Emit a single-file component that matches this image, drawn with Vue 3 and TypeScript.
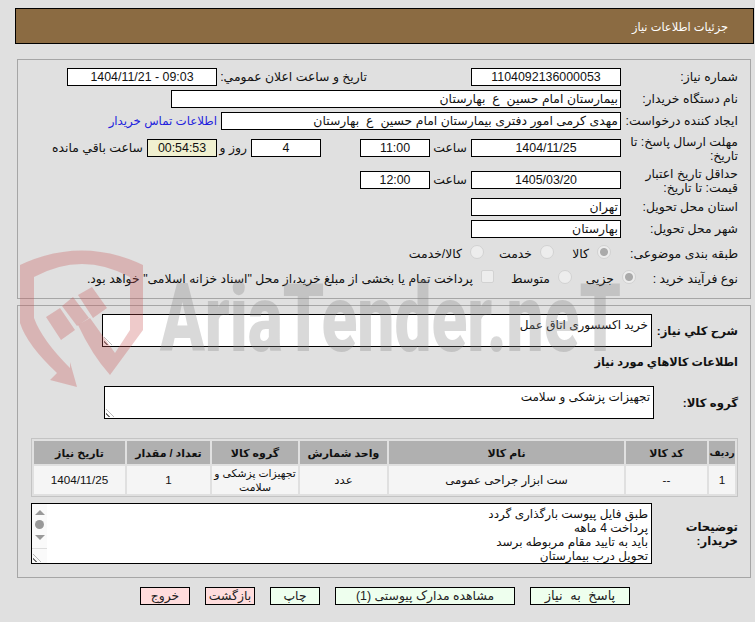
<script setup lang="ts">
interface Col { key: string; title: string; width: number; value: string }
const cols: Col[] = [
  { key: 'row', title: 'رديف', width: 26, value: '1' },
  { key: 'code', title: 'کد کالا', width: 81, value: '--' },
  { key: 'name', title: 'نام کالا', width: 235, value: 'ست ابزار جراحی عمومی' },
  { key: 'unit', title: 'واحد شمارش', width: 87, value: 'عدد' },
  { key: 'group', title: 'گروه کالا', width: 86, value: 'تجهیزات پزشکی و سلامت' },
  { key: 'qty', title: 'تعداد / مقدار', width: 83, value: '1' },
  { key: 'date', title: 'تاريخ نياز', width: 91, value: '1404/11/25' },
]
const notes = [
  'طبق فایل پیوست بارگذاری گردد',
  'پرداخت 4 ماهه',
  'باید به تایید مقام مربوطه برسد',
  'تحویل درب بیمارستان',
]
</script>

<template>
  <div class="page">
    <header class="title-bar">جزئیات اطلاعات نیاز</header>

    <section class="panel panel-top">
      <div class="row">
        <label class="lbl">شماره نیاز:</label>
        <div class="field w150 center">1104092136000053</div>
        <label class="lbl public-lbl">تاريخ و ساعت اعلان عمومي:</label>
        <div class="field w150 center">09:03 - 1404/11/21</div>
      </div>
      <div class="row gap4">
        <label class="lbl">نام دستگاه خریدار:</label>
        <div class="field w450">بیمارستان امام حسین &nbsp;ع &nbsp;بهارستان</div>
      </div>
      <div class="row gap4">
        <label class="lbl">ایجاد کننده درخواست:</label>
        <div class="field w400">مهدی کرمی امور دفتری بیمارستان امام حسین &nbsp;ع &nbsp;بهارستان</div>
        <a class="link">اطلاعات تماس خریدار</a>
      </div>
      <div class="row gap9">
        <label class="lbl two">مهلت ارسال پاسخ: تا تاریخ:</label>
        <div class="field w150 center">1404/11/25</div>
        <span class="unit hour">ساعت</span>
        <div class="field w70 center">11:00</div>
        <div class="field w70 center days">4</div>
        <span class="unit and">روز و</span>
        <div class="field w70 center timer">00:54:53</div>
        <span class="unit left">ساعت باقي مانده</span>
      </div>
      <div class="row gap14">
        <label class="lbl two">حداقل تاریخ اعتبار قیمت: تا تاریخ:</label>
        <div class="field w150 center">1405/03/20</div>
        <span class="unit hour">ساعت</span>
        <div class="field w70 center">12:00</div>
      </div>
      <div class="row gap9">
        <label class="lbl">استان محل تحویل:</label>
        <div class="field w150">تهران</div>
      </div>
      <div class="row gap4">
        <label class="lbl">شهر محل تحویل:</label>
        <div class="field w150">بهارستان</div>
      </div>
      <div class="row gap7">
        <label class="lbl">طبقه بندی موضوعی:</label>
        <div class="choices cat">
          <span class="choice c57"><i class="dot on"></i>کالا</span>
          <span class="choice c70"><i class="dot"></i>خدمت</span>
          <span class="choice"><i class="dot"></i>کالا/خدمت</span>
        </div>
      </div>
      <div class="row gap7">
        <label class="lbl short">نوع فرآیند خرید :</label>
        <div class="choices">
          <span class="choice c64"><i class="dot on"></i>جزیی</span>
          <span class="choice c78"><i class="dot"></i>متوسط</span>
          <span class="choice"><i class="box"></i>پرداخت تمام یا بخشی از مبلغ خرید،از محل "اسناد خزانه اسلامی" خواهد بود.</span>
        </div>
      </div>
    </section>

    <section class="panel panel-bottom">
      <div class="row area-row">
        <label class="lbl bold w86">شرح كلي نياز:</label>
        <div class="area w550">خرید اکسسوری اتاق عمل<i class="grip"></i></div>
      </div>
      <h2 class="subhead">اطلاعات كالاهاي مورد نياز</h2>
      <div class="row area-row group-row">
        <label class="lbl bold w84">گروه کالا:</label>
        <div class="area w550">تجهیزات پزشکی و سلامت<i class="grip"></i></div>
      </div>
      <table class="items">
        <colgroup>
          <col v-for="c in cols" :key="c.key" :style="{ width: c.width + 'px' }" />
        </colgroup>
        <thead>
          <tr><th v-for="c in cols" :key="c.key" :class="'th-' + c.key">{{ c.title }}</th></tr>
        </thead>
        <tbody>
          <tr><td v-for="c in cols" :key="c.key" :class="'td-' + c.key">{{ c.value }}</td></tr>
        </tbody>
      </table>
      <div class="row notes-row">
        <label class="lbl bold w86 two-bold">توضیحات خریدار:</label>
        <div class="notes">
          <div class="note-text">
            <div v-for="n in notes" :key="n">{{ n }}</div>
          </div>
          <div class="scroll">
            <i class="arrow up"></i>
            <i class="thumb"></i>
            <i class="arrow down"></i>
            <i class="corner"><i class="grip"></i></i>
          </div>
        </div>
      </div>
    </section>

    <footer class="actions">
      <button class="btn ok w100 answer">پاسخ به نیاز</button>
      <button class="btn ok w180">مشاهده مدارک پیوستی (1)</button>
      <button class="btn ok w50">چاپ</button>
      <button class="btn no w50">بازگشت</button>
      <button class="btn no w50">خروج</button>
    </footer>

    <div class="watermark" aria-hidden="true">
      <svg class="shield" viewBox="0 0 130 140" width="130" height="140">
        <path d="M3 15 Q65 -14 126 15 L126 80 L93 125 Q75 105 61 75 L73 68 L98 103 L113 80 L113 27 Q65 1 17 27 L17 68 Q25 90 53 118 L53 112 L60 137 L33 130 L40 123 Q10 95 3 73 Z" />
        <path d="M29 67 L43 58 L58 80 L44 90 Z M45 56 L56 47 L72 68 L60 76 Z M61 45 L75 37 L90 58 L76 68 Z" />
      </svg>
      <span class="wm-text">AriaTender.neT</span>
    </div>
  </div>
</template>

<style scoped>
.page {
  position: relative;
  width: 755px;
  height: 622px;
  overflow: hidden;
  padding-top: 8px;
  box-sizing: border-box;
  background: #e0e0e0;
  direction: rtl;
  color: #111;
  font-family: "Liberation Sans", "DejaVu Sans", sans-serif;
  font-size: 12.4px;
  line-height: 14px;
}
.title-bar {
  box-sizing: border-box;
  height: 36px;
  margin: 0 1px 0 15px;
  padding-right: 25px;
  border: 1px solid #000;
  background: #8b6b42;
  color: #fff;
  font-size: 11.4px;
  line-height: 36px;
}
.panel {
  box-sizing: border-box;
  margin: 0 4px 0 17px;
  padding-right: 12px;
  border: 1px solid #a6a6a6;
}
.panel-top { height: 240px; margin-top: 15px; padding-top: 8px; }
.panel-bottom { height: 273px; margin-top: 6px; padding-top: 8px; }
.row { display: flex; align-items: center; height: 18px; }
.gap4 { margin-top: 4px; }
.gap7 { margin-top: 7px; }
.gap9 { margin-top: 9px; }
.gap14 { margin-top: 14px; }
.lbl { flex: none; width: 117px; }
.two { padding-top: 2px; }
.short { width: 102px; }
.public-lbl { width: 150px; margin-right: 104px; }
.field {
  flex: none;
  box-sizing: border-box;
  height: 18px;
  padding: 0 2px;
  border: 1px solid #000;
  background: #fff;
  line-height: 16px;
  white-space: nowrap;
  overflow: hidden;
}
.center { text-align: center; }
.w70 { width: 70px; }
.w150 { width: 150px; }
.w400 { width: 400px; }
.w450 { width: 450px; }
.days { margin-right: 39px; }
.timer { background: #f0f0d0; }
.unit { flex: none; padding-right: 4px; white-space: nowrap; }
.hour { width: 37px; }
.and { width: 30px; }
.link { margin-right: 4px; color: #2222dd; font-size: 11.8px; white-space: nowrap; }
.choices { display: flex; align-items: center; white-space: nowrap; }
.cat { margin-right: 10px; }
.choice { display: flex; align-items: center; flex: none; }
.c57 { width: 57px; }
.c64 { width: 64px; }
.c70 { width: 70px; }
.c78 { width: 78px; }
.dot {
  flex: none;
  box-sizing: border-box;
  width: 14px;
  height: 14px;
  margin-left: 8px;
  border: 1px solid #d2d2d2;
  border-radius: 50%;
  background: #ededed;
  transform: translateY(-2px);
}
.dot.on { background: radial-gradient(circle, #aaa 0 3.5px, #ededed 4.5px); }
.box {
  flex: none;
  box-sizing: border-box;
  width: 13px;
  height: 13px;
  margin-left: 8px;
  border: 1px solid #d2d2d2;
  border-radius: 2px;
  background: #ededed;
  transform: translateY(-3px);
}
.bold { font-weight: 700; font-size: 11.7px; }
.w84 { width: 84px; }
.w86 { width: 86px; }
.area-row { height: 33px; }
.area {
  position: relative;
  box-sizing: border-box;
  height: 33px;
  padding: 3px 3px;
  border: 1px solid #000;
  background: #fff;
  font-size: 12px;
}
.w550 { width: 550px; }
.grip {
  position: absolute;
  left: 1px;
  bottom: 1px;
  width: 8px;
  height: 8px;
  background: repeating-linear-gradient(45deg, transparent 0 2px, #777 2px 3px);
  clip-path: polygon(0 0, 100% 100%, 0 100%);
}
.subhead {
  margin: 8px 0 0;
  height: 14px;
  font-size: 11.3px;
  line-height: 14px;
}
.group-row { margin-top: 17px; }
.items {
  box-sizing: border-box;
  width: 707px;
  margin: 19px 0 0;
  table-layout: fixed;
  border: 1px solid #c4c4c4;
  border-spacing: 2px;
  font-size: 12px;
}
.items th {
  height: 23px;
  padding: 0;
  background: #b0b0b0;
  font-weight: 700;
  font-size: 11px;
}
.items .th-row { font-size: 9.5px; }
.items td {
  height: 28px;
  padding: 0;
  background: #f5f5f5;
  text-align: center;
  line-height: 14px;
  font-size: 11.7px;
}
.items .td-group { font-size: 10.8px; }
.notes-row { height: 61px; margin-top: 6px; }
.notes {
  box-sizing: border-box;
  display: flex;
  width: 621px;
  height: 61px;
  border: 1px solid #000;
  background: #fff;
  font-size: 12px;
}
.note-text { flex: 1; padding: 3px 3px 0 0; }
.scroll {
  position: relative;
  flex: none;
  display: flex;
  flex-direction: column;
  align-items: center;
  width: 15px;
  background: #fafafa;
}
.arrow { width: 0; height: 0; border: 5px solid transparent; margin-top: 6px; }
.arrow.up { border-top: 0; border-bottom: 5px solid #999; }
.arrow.down { border-bottom: 0; border-top: 5px solid #999; margin-top: 6px; }
.thumb { width: 9px; height: 9px; margin-top: 5px; border-radius: 50%; background: #999; }
.corner {
  position: absolute;
  left: 0;
  bottom: 0;
  width: 15px;
  height: 14px;
  border-top: 1px solid #ddd;
}
.actions {
  display: flex;
  gap: 15px;
  margin-top: 9px;
  padding-right: 125px;
}
.btn {
  box-sizing: border-box;
  height: 18px;
  padding: 0;
  border: 1px solid #000;
  color: #222;
  font: inherit;
  line-height: 14px;
}
.answer { word-spacing: 4px; font-size: 13px; }
.ok { background: #eeffee; }
.no { background: #ffdddd; }
.w50 { width: 50px; }
.w100 { width: 100px; }
.w180 { width: 180px; }
.watermark {
  position: absolute;
  left: 0;
  top: 0;
  width: 755px;
  height: 400px;
  direction: ltr;
  pointer-events: none;
}
.shield { position: absolute; left: 17px; top: 250px; fill: rgba(200, 80, 80, 0.3); }
.wm-text {
  position: absolute;
  left: 160px;
  top: 264px;
  font-family: Roboto, sans-serif;
  font-weight: 900;
  font-size: 94px;
  line-height: 110px;
  white-space: nowrap;
  color: rgba(130, 130, 130, 0.3);
  transform: scaleX(0.7);
  transform-origin: left top;
}
</style>
<style>
html, body { margin: 0; background: #e0e0e0; }
</style>
